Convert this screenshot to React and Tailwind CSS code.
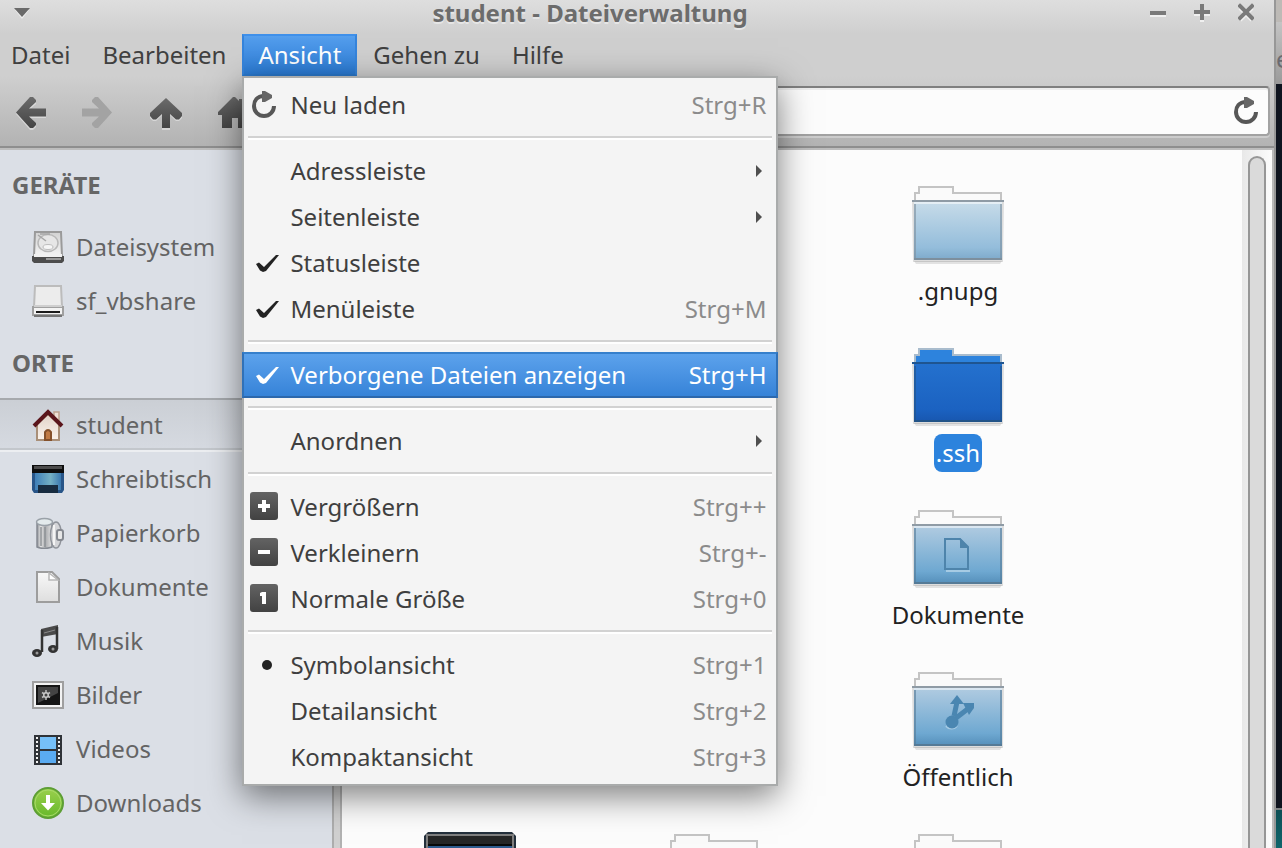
import React from "react";

/* ---------- toolbar and menu glyphs ---------- */

const Glyph = ({ w, h, className = "", children }) => (
  <svg width={w} height={h} viewBox={`0 0 ${w} ${h}`} className={`shrink-0 ${className}`} aria-hidden="true">
    {children}
  </svg>
);

const GlyphGradients = () => (
  <svg width="0" height="0" className="absolute" aria-hidden="true">
    <defs>
      <linearGradient id="dark" x1="0" y1="0" x2="0" y2="1">
        <stop offset="0" stopColor="#6b6b6b" />
        <stop offset="1" stopColor="#444444" />
      </linearGradient>
      <linearGradient id="badge" x1="0" y1="0" x2="0" y2="1">
        <stop offset="0" stopColor="#636363" />
        <stop offset="1" stopColor="#424242" />
      </linearGradient>
      <linearGradient id="folderLight" x1="0" y1="0" x2="0" y2="1">
        <stop offset="0" stopColor="#c8dce9" />
        <stop offset="0.8" stopColor="#94bddb" />
        <stop offset="1" stopColor="#7fabcb" />
      </linearGradient>
      <linearGradient id="folderBlue" x1="0" y1="0" x2="0" y2="1">
        <stop offset="0" stopColor="#b2cce1" />
        <stop offset="0.8" stopColor="#6ea8d1" />
        <stop offset="1" stopColor="#5690bb" />
      </linearGradient>
      <linearGradient id="folderSelected" x1="0" y1="0" x2="0" y2="1">
        <stop offset="0" stopColor="#2471ce" />
        <stop offset="0.8" stopColor="#1b62c1" />
        <stop offset="1" stopColor="#1857b0" />
      </linearGradient>
      <linearGradient id="metal" x1="0" y1="0" x2="0" y2="1">
        <stop offset="0" stopColor="#d2d2d2" />
        <stop offset="1" stopColor="#f4f4f4" />
      </linearGradient>
      <linearGradient id="paper" x1="0" y1="0" x2="0" y2="1">
        <stop offset="0" stopColor="#f8f8f8" />
        <stop offset="1" stopColor="#dedede" />
      </linearGradient>
      <linearGradient id="screen" x1="0" y1="0" x2="1" y2="0">
        <stop offset="0" stopColor="#3f7fb8" />
        <stop offset="0.6" stopColor="#74b0c4" />
        <stop offset="1" stopColor="#3a78b0" />
      </linearGradient>
      <linearGradient id="wall" x1="0" y1="0" x2="0" y2="1">
        <stop offset="0" stopColor="#e0d2c8" />
        <stop offset="1" stopColor="#fbf3ec" />
      </linearGradient>
      <linearGradient id="can" x1="0" y1="0" x2="1" y2="0">
        <stop offset="0" stopColor="#8d9096" />
        <stop offset="0.25" stopColor="#e6e6e6" />
        <stop offset="0.55" stopColor="#a9abae" />
        <stop offset="1" stopColor="#e2e2e2" />
      </linearGradient>
      <linearGradient id="green" x1="0" y1="0" x2="0" y2="1">
        <stop offset="0" stopColor="#9bd04d" />
        <stop offset="1" stopColor="#66b82a" />
      </linearGradient>
    </defs>
  </svg>
);

const BackIcon = () => (
  <Glyph w={34} h={34}>
    <path d="M16 1 L2 17 L16 33 H19 L22 30 V27 L15 21 H32 V13 H15 L22 7 V4 L19 1 Z" fill="#fff" opacity="0.4" transform="translate(0 1)" />
    <path d="M16 1 L2 16.500 L16 32 H19 L22 29 V27 L15 20.500 H32 V12.500 H15 L22 6 V4 L19 1 Z" fill="url(#dark)" />
  </Glyph>
);
const ForwardIcon = () => (
  <Glyph w={34} h={34}>
    <path d="M16 1 L30 16.500 L16 32 H13 L10 29 V27 L17 20.500 H0 V12.500 H17 L10 6 V4 L13 1 Z" fill="#a3a3a3" />
  </Glyph>
);
const UpIcon = () => (
  <Glyph w={34} h={34}>
    <path d="M0 18 L16 3 L32 18 V22 L29 25 H26 L20 19 V34 H12 V19 L6 25 H3 L0 22 Z" fill="#fff" opacity="0.4" />
    <path d="M0 17 L16 2 L32 17 V20 L29 23.500 H26 L20 18 V32 H12 V18 L6 23.500 H3 L0 20 Z" fill="url(#dark)" />
  </Glyph>
);
const HomeIcon = () => (
  <Glyph w={34} h={34}>
    <path d="M15 1 L17 1 L21 5 V3 H26 V9 L33 16 V19 H28 V32 H20 V22 H14 V32 H4 V19 H0 V16 Z" fill="url(#dark)" />
  </Glyph>
);
const ReloadIcon = () => (
  <Glyph w={28} h={28}>
    <path d="M14 5 C7 5 4 10 4 15 A10 10 0 0 0 24 15" fill="none" stroke="#575757" strokeWidth="4" />
    <path d="M12 0 H15 L22 4 V7 L15 11 H12 Z" fill="#666" />
  </Glyph>
);
const CheckIcon = ({ color }) => (
  <Glyph w={32} h={28}>
    <path d="M6 15 L9 13.500 L14 18 L26 6 H29 L16 22 L13 23 L10 21.500 Z" fill={color} />
  </Glyph>
);
const BulletIcon = () => (
  <Glyph w={32} h={28}>
    <circle cx="17" cy="14" r="5" fill="#222" />
  </Glyph>
);
const BadgeIcon = ({ sign }) => (
  <Glyph w={32} h={30}>
    <rect x="0" y="0" width="28" height="28" rx="3" fill="url(#badge)" />
    {sign === "plus" && <path d="M12 8 H16 V12 H20 V16 H16 V20 H12 V16 H8 V12 H12 Z" fill="#fff" />}
    {sign === "minus" && <path d="M8 12 H20 V16 H8 Z" fill="#fff" />}
    {sign === "one" && <path d="M12 8 H16 V20 H12 V12 H10 V9 Z" fill="#fff" />}
  </Glyph>
);

/* ---------- sidebar icons, 32 x 32 ---------- */

const icons = {
  disk: (
    <>
      <path d="M3 1 H29 L30 25 H2 Z" fill="url(#metal)" stroke="#9a9a9a" strokeWidth="2" />
      <ellipse cx="16" cy="12" rx="10" ry="8.500" fill="#e6e6e6" stroke="#b8b8b8" strokeWidth="1.500" />
      <path d="M6 4 L14 10 M8 3 H18" stroke="#a6a6a6" strokeWidth="1.500" />
      <ellipse cx="16" cy="16" rx="5" ry="2.500" fill="#f6f6f6" stroke="#bdbdbd" strokeWidth="1" />
      <path d="M0 25 H32 V30 L30 32 H2 L0 30 Z" fill="#4c4c4c" />
      <path d="M2 23 H30 V26 H2 Z" fill="#f1f1f1" />
      <path d="M14 27 H29 V29 H14 Z" fill="#999" />
    </>
  ),
  drive: (
    <>
      <path d="M3 1 H29 L30 22 H2 Z" fill="#ececec" stroke="#bcbcbc" strokeWidth="2" />
      <path d="M1 22 H31 V30 H1 Z" fill="#f3f3f3" stroke="#a0a0a0" strokeWidth="2" />
      <path d="M2 21 H30" stroke="#cfcfcf" strokeWidth="2" />
      <path d="M2 31 H30" stroke="#757575" strokeWidth="2" />
      <path d="M4 27 H28" stroke="#1c1c1c" strokeWidth="2" />
    </>
  ),
  house: (
    <>
      <rect x="22" y="3" width="5" height="10" fill="#eee0d6" stroke="#bda18d" strokeWidth="1.500" />
      <path d="M5 31 V15 L16 5 L27 15 V31 Z" fill="url(#wall)" stroke="#a98f78" strokeWidth="2" />
      <path d="M2 17 L16 3 L30 17" fill="none" stroke="#5a151b" strokeWidth="4" />
      <path d="M13 31 V23 Q16 19 19 23 V31 Z" fill="#c07a45" stroke="#85512c" strokeWidth="2" />
    </>
  ),
  desktop: (
    <>
      <path d="M0 2 H32 V27 L30 30 H2 L0 27 Z" fill="#285588" />
      <rect x="3" y="9" width="26" height="18" fill="url(#screen)" />
      <rect x="0" y="2" width="32" height="8" fill="#0d0d0d" />
      <rect x="2" y="3" width="28" height="3" fill="#4b4b4b" />
      <rect x="6" y="22" width="20" height="8" fill="#182c40" />
    </>
  ),
  trash: (
    <>
      <path d="M5 6 H20 V30 Q12 33 5 30 Z" fill="url(#can)" stroke="#868b93" strokeWidth="1.500" />
      <path d="M9 10 V29 M13 10 V30" stroke="#8f9296" strokeWidth="1.500" />
      <ellipse cx="12.500" cy="5" rx="8" ry="3.500" fill="#e3eaec" stroke="#9aa1a8" strokeWidth="1.500" />
      <ellipse cx="24" cy="18" rx="5.500" ry="13" fill="#d4d5d8" stroke="#8f939a" strokeWidth="1.500" />
      <path d="M22 8 V28" stroke="#f4f4f4" strokeWidth="2" />
      <rect x="25" y="13" width="6" height="10" rx="2" fill="#e7e7e7" stroke="#858990" strokeWidth="2" />
    </>
  ),
  page: (
    <>
      <path d="M5 1 H20 L27 8 V31 H5 Z" fill="url(#paper)" stroke="#9d9d9d" strokeWidth="2" />
      <path d="M17 2 V9 H26 Z" fill="#fff" stroke="#b8b8b8" strokeWidth="1.500" />
    </>
  ),
  music: (
    <>
      <path d="M9 4 L26 0 V9 L9 12 Z" fill="#4a4a4a" />
      <path d="M10 5 V27 M25 2 V24" fill="none" stroke="#333" strokeWidth="2.500" />
      <path d="M12 8 L23 5" stroke="#8a8a8a" strokeWidth="1" />
      <ellipse cx="5" cy="28" rx="5" ry="4" fill="#333" />
      <ellipse cx="21" cy="24" rx="5" ry="4" fill="#333" />
      <circle cx="5" cy="28" r="1.500" fill="#999" />
      <circle cx="21" cy="24" r="1.500" fill="#999" />
    </>
  ),
  picture: (
    <>
      <rect x="1" y="3" width="30" height="26" fill="#f3f3f3" stroke="#9f9f9f" strokeWidth="2" />
      <rect x="4" y="6" width="24" height="20" fill="#151515" />
      <path d="M6 8 H26 V14 L6 24 Z" fill="#444" />
      <path d="M14 11 V21 M10 13.500 L18 18.500 M18 13.500 L10 18.500" stroke="#bdbdbd" strokeWidth="1.500" />
      <circle cx="14" cy="16" r="3" fill="#c9c9c9" />
      <circle cx="14" cy="16" r="1.500" fill="#444" />
    </>
  ),
  video: (
    <>
      <rect x="2" y="2" width="28" height="30" fill="#2f3338" />
      <rect x="8" y="4" width="16" height="12" fill="#76c0f8" />
      <rect x="8" y="18" width="16" height="12" fill="#5aabf1" />
      <path d="M5 4 V31 M27 4 V31" stroke="#f0f0f0" strokeWidth="2" strokeDasharray="2 2" />
    </>
  ),
  download: (
    <>
      <circle cx="16" cy="16" r="15" fill="url(#green)" stroke="#5d9e35" strokeWidth="2" />
      <circle cx="16" cy="16" r="13" fill="none" stroke="#a9da6b" strokeWidth="1" />
      <path d="M14 8 H18 V16 H23 L16 23.500 L9 16 H14 Z" fill="#fff" />
    </>
  ),
};

/* ---------- folder view icons, 96 x 96 ---------- */

const Folder = ({ kind, emblem }) => {
  const selected = kind === "selected";
  const fill = selected ? "url(#folderSelected)" : kind === "light" ? "url(#folderLight)" : "url(#folderBlue)";
  const edge = selected ? "#235488" : kind === "light" ? "#7d8f9d" : "#557a96";
  return (
    <Glyph w={96} h={96}>
      <path d="M4 85 H92 L90 88 H6 Z" fill="#000" opacity="0.1" />
      <path
        d="M5 26 V17 H9 V11 H43 V17 H91 V26 Z"
        fill={selected ? "#2d83dd" : "#fafafa"}
        stroke={selected ? "#a9bccd" : "#c4c4c4"}
        strokeWidth="2"
      />
      <path d="M2 24 H94 L93 86 H3 Z" fill="#000" opacity="0.12" />
      <path d="M4 25 H92 V83 H4 Z" fill={fill} />
      {!selected && <path d="M4 27 H92" stroke="#fff" strokeWidth="2" opacity="0.55" />}
      <path d="M5 28 V83 M91 28 V83" stroke={edge} strokeWidth="2" opacity="0.6" />
      <path d="M4 83 H92" stroke={edge} strokeWidth="2" />
      <path d="M2 25 H94" stroke={selected ? "#1f5590" : "#8f9ba5"} strokeWidth="2" />
      {emblem === "page" && (
        <>
          <path d="M36 71 H60" stroke="#a6cbe4" strokeWidth="2" />
          <path d="M35 39 H50 L58 47 V69 H35 Z" fill="none" stroke="#4e84ab" strokeWidth="2" />
          <path d="M50 38 V48 H59 Z" fill="#4e84ab" />
        </>
      )}
      {emblem === "share" && (
        <g fill="#4a86b1">
          <path d="M36 64 a7 6.500 0 0 0 11 0" fill="none" stroke="#a6cbe4" strokeWidth="2" />
          <circle cx="42" cy="60" r="6.500" />
          <path d="M44 54 L47 40 M46 56 L59 46" fill="none" stroke="#4a86b1" strokeWidth="5" />
          <path d="M40 42 L47 33 L54 42 Z" />
          <path d="M53 41 H64 V46 L59 53 Z" />
        </g>
      )}
    </Glyph>
  );
};

const DesktopLarge = () => (
  <Glyph w={96} h={96}>
    <path d="M2 12 L6 8 H90 L94 12 V84 H2 Z" fill="#24303c" />
    <rect x="5" y="11" width="86" height="12" fill="#262626" stroke="#7f7f7f" strokeWidth="2" />
    <rect x="6" y="20" width="84" height="2" fill="#080808" />
    <rect x="6" y="22" width="84" height="58" fill="#2d5b8e" />
  </Glyph>
);

/* ---------- data ---------- */

const menuBar = ["Datei", "Bearbeiten", "Ansicht", "Gehen zu", "Hilfe"];

const menuGroups = [
  [{ label: "Neu laden", keys: "Strg+R", icon: <ReloadIcon /> }],
  [
    { label: "Adressleiste", submenu: true },
    { label: "Seitenleiste", submenu: true },
    { label: "Statusleiste", icon: <CheckIcon color="#222" /> },
    { label: "Menüleiste", keys: "Strg+M", icon: <CheckIcon color="#222" /> },
  ],
  [{ label: "Verborgene Dateien anzeigen", keys: "Strg+H", icon: <CheckIcon color="#fff" />, active: true }],
  [{ label: "Anordnen", submenu: true }],
  [
    { label: "Vergrößern", keys: "Strg++", icon: <BadgeIcon sign="plus" /> },
    { label: "Verkleinern", keys: "Strg+-", icon: <BadgeIcon sign="minus" /> },
    { label: "Normale Größe", keys: "Strg+0", icon: <BadgeIcon sign="one" /> },
  ],
  [
    { label: "Symbolansicht", keys: "Strg+1", icon: <BulletIcon /> },
    { label: "Detailansicht", keys: "Strg+2" },
    { label: "Kompaktansicht", keys: "Strg+3" },
  ],
];

const sidebar = [
  {
    title: "GERÄTE",
    items: [
      ["Dateisystem", "disk"],
      ["sf_vbshare", "drive"],
    ],
  },
  {
    title: "ORTE",
    items: [
      ["student", "house"],
      ["Schreibtisch", "desktop"],
      ["Papierkorb", "trash"],
      ["Dokumente", "page"],
      ["Musik", "music"],
      ["Bilder", "picture"],
      ["Videos", "video"],
      ["Downloads", "download"],
    ],
  },
];

const files = [
  { label: ".gnupg", place: "col-start-3 row-start-1", icon: <Folder kind="light" /> },
  { label: ".ssh", place: "col-start-3 row-start-2", icon: <Folder kind="selected" />, selected: true },
  { label: "Dokumente", place: "col-start-3 row-start-3", icon: <Folder kind="blue" emblem="page" /> },
  { label: "Öffentlich", place: "col-start-3 row-start-4", icon: <Folder kind="blue" emblem="share" /> },
  { place: "col-start-1 row-start-5", icon: <DesktopLarge /> },
  { place: "col-start-2 row-start-5", icon: <Folder kind="blue" /> },
  { place: "col-start-3 row-start-5", icon: <Folder kind="blue" /> },
];

/* ---------- parts ---------- */

const TitleBar = () => (
  <header className="flex h-[34px] shrink-0 items-center bg-linear-to-b from-[#dedede] to-[#cfcfcf] pr-5 pb-2 pl-3.5">
    <button aria-label="Fenstermenü">
      <Glyph w={16} h={12}>
        <path d="M1 3 L8 12 L15 3 Z" fill="#fff" opacity="0.6" />
        <path d="M0 1 H16 L8 10 Z" fill="#6a6a6a" />
      </Glyph>
    </button>
    <h1 className="flex-1 text-center leading-6 font-bold text-[#6c6c6c] [text-shadow:0_2px_0_#e6e6e6]">student - Dateiverwaltung</h1>
    <div className="flex gap-7">
      <button aria-label="Minimieren">
        <Glyph w={16} h={20}>
          <path d="M0 12 H16 V14 H0 Z" fill="#f0f0f0" />
          <path d="M0 8 H16 V12 H0 Z" fill="#7a7a7a" />
        </Glyph>
      </button>
      <button aria-label="Maximieren">
        <Glyph w={16} h={20}>
          <path d="M0 11 H16 V13 H0 Z M6 17 H10 V19 H6 Z" fill="#f0f0f0" />
          <path d="M6 1 H10 V7 H16 V11 H10 V17 H6 V11 H0 V7 H6 Z" fill="#7a7a7a" />
        </Glyph>
      </button>
      <button aria-label="Schließen">
        <Glyph w={16} h={20}>
          <path d="M2 5 L14 17 M14 5 L2 17" stroke="#f0f0f0" strokeWidth="4" />
          <path d="M2 3 L14 15 M14 3 L2 15" stroke="#7a7a7a" strokeWidth="4" strokeLinecap="square" />
        </Glyph>
      </button>
    </div>
  </header>
);

const MenuItem = ({ item }) => (
  <button
    role="menuitem"
    className={
      item.active
        ? "-mx-0.5 flex h-[46px] items-center gap-2 border-2 border-t-[#3680cc] border-r-[#3071b8] border-b-[#2c68ac] border-l-[#3071b8] bg-linear-to-b from-[#5ca2ec] to-[#3683d8] pr-2.5 pl-1.5 text-white"
        : "flex h-[46px] items-center gap-2 pr-2.5 pl-1.5 text-[#3f3f3f]"
    }
  >
    <span className="flex w-8 shrink-0">{item.icon}</span>
    <span className="flex-1 text-left">{item.label}</span>
    {item.keys && <span className={item.active ? "text-white" : "text-[#8b8b8b]"}>{item.keys}</span>}
    {item.submenu && (
      <Glyph w={12} h={12}>
        <path d="M2 0 L8 6 L2 12 Z" fill="#4f4f4f" />
      </Glyph>
    )}
  </button>
);

const ViewMenu = () => (
  <div
    role="menu"
    aria-label="Ansicht"
    className="absolute top-full left-0 z-10 flex w-[536px] flex-col border-2 border-[#a9abab] bg-[#f4f4f4] py-1 shadow-[0_10px_32px_rgba(0,0,0,0.5)]"
  >
    {menuGroups.map((group, i) => (
      <React.Fragment key={i}>
        {i > 0 && <div role="separator" className="mx-1 my-2 h-1 border-t-2 border-[#d2d2d2] bg-white" />}
        {group.map((item) => (
          <MenuItem key={item.label} item={item} />
        ))}
      </React.Fragment>
    ))}
  </div>
);

const MenuBar = () => (
  <nav className="flex h-[42px] shrink-0 bg-[#cfcfcf] pl-px text-[#404040]">
    {menuBar.map((name, i) =>
      name === "Ansicht" ? (
        <div key={name} className="relative">
          <button
            aria-expanded="true"
            className="h-full border-2 border-t-[#3f90ea] border-r-[#3584dc] border-b-[#2a78cc] border-l-[#3584dc] bg-linear-to-b from-[#559fee] to-[#2a7bd4] px-3.5 text-white"
          >
            {name}
          </button>
          <ViewMenu />
        </div>
      ) : (
        <button key={name} className={i === 0 ? "h-full pr-4 pl-2.5" : "h-full px-4"}>
          {name}
        </button>
      )
    )}
  </nav>
);

const ToolBar = () => (
  <div className="flex h-[74px] shrink-0 items-start gap-[34px] border-b-2 border-[#bdbdbd] bg-linear-to-b from-[#cfcfcf] to-[#b2b2b2] pr-1 pl-3.5 shadow-[inset_0_-2px_0_#8e8e8e]">
    <button aria-label="Zurück" className="mt-5"><BackIcon /></button>
    <button aria-label="Vor" className="mt-5" disabled><ForwardIcon /></button>
    <button aria-label="Übergeordneter Ordner" className="mt-5"><UpIcon /></button>
    <button aria-label="Persönlicher Ordner" className="mt-5"><HomeIcon /></button>
    <div className="mt-2.5 flex h-[50px] flex-1 items-center rounded-sm border-2 border-[#a2a2a2] border-t-[#7f7f7f] bg-[#fcfcfc] pr-2 shadow-[0_2px_0_#cccccc,inset_0_2px_0_#ececec]">
      <input aria-label="Adresse" className="h-full min-w-0 flex-1 bg-transparent px-3 outline-none" />
      <button aria-label="Neu laden"><ReloadIcon /></button>
    </div>
  </div>
);

const SideBar = () => (
  <aside className="w-[334px] shrink-0 overflow-hidden border-r-2 border-[#adadad] bg-[#dbdfe6] text-[#646464]">
    {sidebar.map((section) => (
      <section key={section.title}>
        <h2 className="flex h-[70px] items-center pl-3 font-bold text-[#666666]">{section.title}</h2>
        <ul>
          {section.items.map(([label, icon]) => (
            <li key={label}>
              <a
                href="#"
                className={
                  label === "student"
                    ? "flex h-[54px] items-center gap-3 border-t-2 border-b-2 border-t-[#a6a9ad] border-b-[#eceef1] bg-linear-to-b from-[#cbcfd5] to-[#d6dae1] pl-8 shadow-[inset_0_-2px_0_#c3c7cc]"
                    : "flex h-[54px] items-center gap-3 pl-8"
                }
              >
                <Glyph w={32} h={32}>{icons[icon]}</Glyph>
                {label}
              </a>
            </li>
          ))}
        </ul>
      </section>
    ))}
  </aside>
);

const FileView = () => (
  <main className="flex min-w-0 flex-1 overflow-hidden bg-[#fcfcfc]">
    <div className="grid flex-1 auto-rows-[162px] grid-cols-[repeat(3,244px)] content-start pt-[26px] pl-1.5 text-[#222222]">
      {files.map((file) => (
        <div key={file.place} className={`flex flex-col items-center ${file.place}`}>
          {file.icon}
          {file.label && (
            <span
              className={
                file.selected
                  ? "flex h-[38px] items-center rounded-lg bg-[#2c83dd] px-0.5 text-white"
                  : "flex h-[38px] items-center"
              }
            >
              {file.label}
            </span>
          )}
        </div>
      ))}
    </div>
    <div className="flex w-[30px] shrink-0 bg-linear-to-r from-[#e8e8e8] to-[#fcfcfc] pt-1.5 pl-1.5">
      <div className="w-[18px] rounded-t-full border-2 border-b-0 border-[#969696] bg-[#dadada]" />
    </div>
  </main>
);

/* Edge of the windows and wallpaper behind the file manager */
const Backdrop = () => (
  <div className="flex w-1.5 shrink-0 flex-col overflow-hidden">
    <div className="h-[22px] shrink-0 bg-[#bdbab6]" />
    <div className="flex h-[62px] shrink-0 items-center bg-linear-to-b from-[#c4c4c4] to-[#9a9a9a] pt-3 text-[#6b6b70]">e</div>
    <div className="flex-1 bg-[#0f141f]" />
    <div className="h-10 shrink-0 border-t-2 border-[#7d8284] bg-linear-to-b from-[#0d4f55] to-[#0f666c]" />
  </div>
);

export default function App() {
  return (
    <div className="flex h-screen overflow-hidden bg-[#0f141f] font-['Noto_Sans',sans-serif] text-2xl leading-8">
      <GlyphGradients />
      <div className="flex min-w-0 flex-1 flex-col border-r-2 border-[#979797] bg-[#cfcfcf]">
        <TitleBar />
        <MenuBar />
        <ToolBar />
        <div className="flex min-h-0 flex-1 border-r-2 border-[#bababa]">
          <SideBar />
          <div className="w-2 shrink-0 border-r-2 border-[#b2b2b2] bg-[#d0d0d0]" />
          <FileView />
        </div>
      </div>
      <Backdrop />
    </div>
  );
}
